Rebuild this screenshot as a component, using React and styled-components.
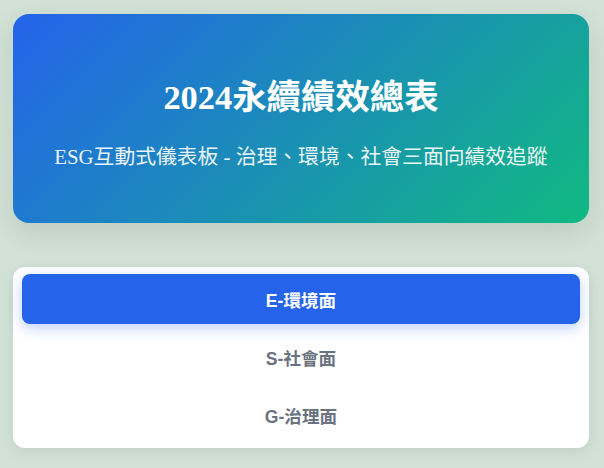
import React, { useState } from 'react';
import styled, { createGlobalStyle } from 'styled-components';

const GlobalStyle = createGlobalStyle`
  html, body {
    margin: 0;
    padding: 0;
    background: #d2e2d6;
  }
  body {
    font-family: "Liberation Serif", "Noto Sans CJK TC", serif;
  }
`;

const Page = styled.div`
  display: flex;
  flex-direction: column;
  gap: 44px;
  padding: 14px 15px 20px 13px;
`;

const Header = styled.header`
  display: flex;
  flex-direction: column;
  align-items: center;
  gap: 26px;
  padding: 63px 24px 52px;
  border-radius: 16px;
  background: linear-gradient(135deg, #2563eb 0%, #10b981 100%);
  box-shadow: 0 10px 30px rgba(0, 0, 0, 0.1);
  color: #ffffff;
  text-align: center;
`;

const Title = styled.h1`
  margin: 0;
  font-size: 34.4px;
  line-height: 40px;
  font-weight: 700;
`;

const Subtitle = styled.p`
  margin: 0;
  font-size: 20.8px;
  line-height: 28px;
  opacity: 0.9;
`;

const TabCard = styled.nav`
  display: flex;
  flex-direction: column;
  gap: 8px;
  padding: 7px 9px 8px;
  background: #ffffff;
  border-radius: 12px;
  box-shadow: 0 4px 16px rgba(0, 0, 0, 0.08);
`;

const Tab = styled.button`
  height: 50px;
  border: none;
  border-radius: 8px;
  cursor: pointer;
  font-family: "Liberation Sans", "Noto Sans CJK TC", sans-serif;
  font-size: 17.6px;
  font-weight: 700;
  background: ${(p) => (p.$active ? '#2563eb' : 'transparent')};
  color: ${(p) => (p.$active ? '#ffffff' : '#6b7280')};
  box-shadow: ${(p) => (p.$active ? '0 4px 14px rgba(37, 99, 235, 0.3)' : 'none')};
`;

const tabs = ['E-環境面', 'S-社會面', 'G-治理面'];

export default function App() {
  const [active, setActive] = useState(0);
  return (
    <>
      <GlobalStyle />
      <Page>
        <Header>
          <Title>2024永續績效總表</Title>
          <Subtitle>ESG互動式儀表板 - 治理、環境、社會三面向績效追蹤</Subtitle>
        </Header>
        <TabCard>
          {tabs.map((t, i) => (
            <Tab key={t} $active={active === i} onClick={() => setActive(i)}>
              {t}
            </Tab>
          ))}
        </TabCard>
      </Page>
    </>
  );
}
